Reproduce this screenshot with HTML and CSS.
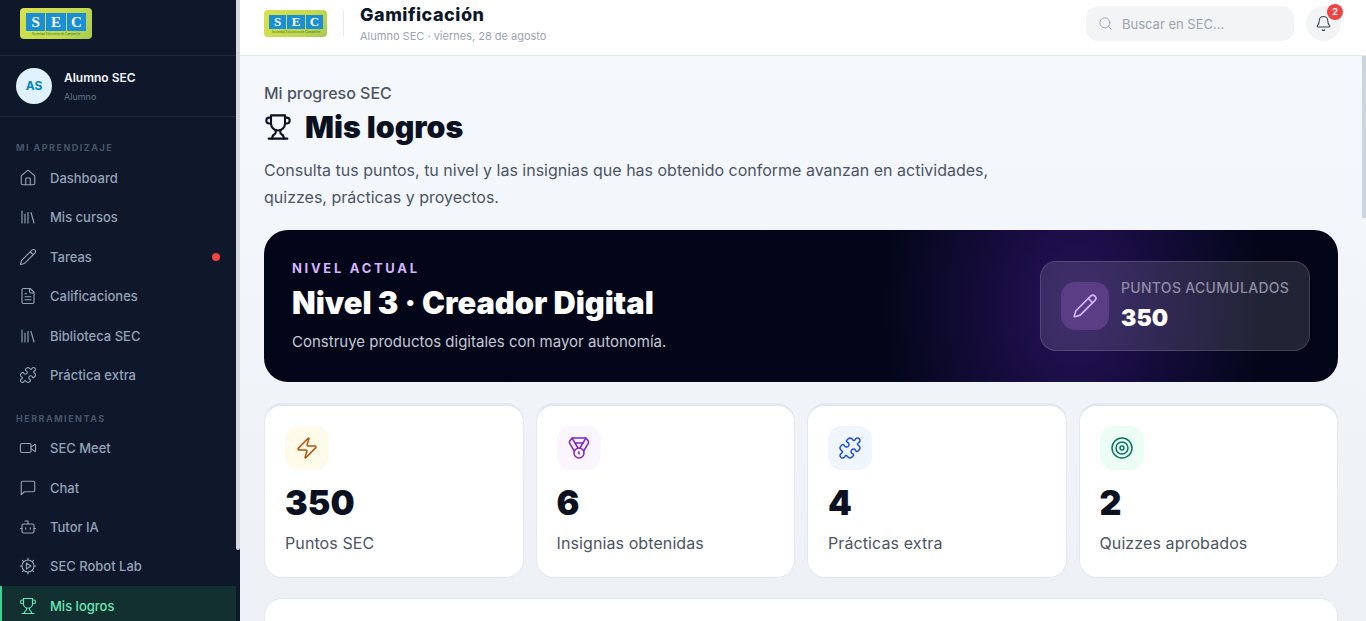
FILE: index.html
```html
<!DOCTYPE html>
<html lang="es">
<head>
    <meta charset="UTF-8">
    <title>Mis logros - SEC</title>
    <link rel="stylesheet" href="styles.css">
</head>
<body>
<svg class="sprite" xmlns="http://www.w3.org/2000/svg">
    <symbol id="i-house" viewBox="0 0 24 24"><path d="M15 21v-8a1 1 0 0 0-1-1h-4a1 1 0 0 0-1 1v8"/><path d="M3 10a2 2 0 0 1 .709-1.528l7-5.999a2 2 0 0 1 2.582 0l7 5.999A2 2 0 0 1 21 10v9a2 2 0 0 1-2 2H5a2 2 0 0 1-2-2z"/></symbol>
    <symbol id="i-library" viewBox="0 0 24 24"><path d="m16 6 4 14"/><path d="M12 6v14"/><path d="M8 8v12"/><path d="M4 4v16"/></symbol>
    <symbol id="i-pencil" viewBox="0 0 24 24"><path d="M21.174 6.812a1 1 0 0 0-3.986-3.987L3.842 16.174a2 2 0 0 0-.5.83l-1.321 4.352a.5.5 0 0 0 .623.622l4.353-1.32a2 2 0 0 0 .83-.497z"/><path d="m15 5 4 4"/></symbol>
    <symbol id="i-file" viewBox="0 0 24 24"><path d="M15 2H6a2 2 0 0 0-2 2v16a2 2 0 0 0 2 2h12a2 2 0 0 0 2-2V7Z"/><path d="M14 2v4a2 2 0 0 0 2 2h4"/><path d="M10 9H8"/><path d="M16 13H8"/><path d="M16 17H8"/></symbol>
    <symbol id="i-puzzle" viewBox="0 0 24 24"><path d="M19.439 7.85c-.049.322.059.648.289.878l1.568 1.568c.47.47.706 1.087.706 1.704s-.235 1.233-.706 1.704l-1.611 1.611a.98.98 0 0 1-.837.276c-.47-.07-.802-.48-.968-.925a2.501 2.501 0 1 0-3.214 3.214c.446.166.855.497.925.968a.979.979 0 0 1-.276.837l-1.61 1.61a2.404 2.404 0 0 1-1.705.707 2.402 2.402 0 0 1-1.704-.706l-1.568-1.568a1.026 1.026 0 0 0-.877-.29c-.493.074-.84.504-1.02.968a2.5 2.5 0 1 1-3.237-3.237c.464-.18.894-.527.967-1.02a1.026 1.026 0 0 0-.289-.877l-1.568-1.568A2.402 2.402 0 0 1 1.998 12c0-.617.236-1.234.706-1.704L4.23 8.77c.24-.24.581-.353.917-.303.515.077.877.528 1.073 1.01a2.5 2.5 0 1 0 3.259-3.259c-.482-.196-.933-.558-1.01-1.073-.05-.336.062-.676.303-.917l1.525-1.525A2.402 2.402 0 0 1 12 1.998c.617 0 1.234.236 1.704.706l1.568 1.568c.23.23.556.338.877.29.493-.074.84-.504 1.02-.968a2.5 2.5 0 1 1 3.237 3.237c-.464.18-.894.527-.967 1.02Z"/></symbol>
    <symbol id="i-video" viewBox="0 0 24 24"><path d="m16 13 5.223 3.482a.5.5 0 0 0 .777-.416V7.87a.5.5 0 0 0-.752-.432L16 10.5"/><rect x="2" y="6" width="14" height="12" rx="2"/></symbol>
    <symbol id="i-chat" viewBox="0 0 24 24"><path d="M21 15a2 2 0 0 1-2 2H7l-4 4V5a2 2 0 0 1 2-2h14a2 2 0 0 1 2 2z"/></symbol>
    <symbol id="i-bot" viewBox="0 0 24 24"><path d="M12 8V4H8"/><rect x="4" y="8" width="16" height="12" rx="2"/><path d="M2 14h2"/><path d="M20 14h2"/><path d="M15 13v2"/><path d="M9 13v2"/></symbol>
    <symbol id="i-gear" viewBox="0 0 24 24"><circle cx="12" cy="12" r="8"/><path d="M12 1.500V4M12 20v2.500M1.500 12H4M20 12h2.500M4.600 4.600l1.700 1.700M17.700 17.700l1.700 1.700M4.600 19.400l1.700-1.700M17.700 6.300l1.700-1.700"/><path d="M9.800 8v8l6.200-4z"/></symbol>
    <symbol id="i-trophy" viewBox="0 0 24 24"><path d="M6 9H4.500a2.500 2.500 0 0 1 0-5H6"/><path d="M18 9h1.500a2.500 2.500 0 0 0 0-5H18"/><path d="M4 22h16"/><path d="M10 14.660V17c0 .55-.47.98-.97 1.210C7.850 18.750 7 20.240 7 22"/><path d="M14 14.660V17c0 .55.47.98.97 1.210C16.150 18.750 17 20.240 17 22"/><path d="M18 2H6v7a6 6 0 0 0 12 0V2Z"/></symbol>
    <symbol id="i-bell" viewBox="0 0 24 24"><path d="M10.268 21a2 2 0 0 0 3.464 0"/><path d="M3.262 15.326A1 1 0 0 0 4 17h16a1 1 0 0 0 .74-1.673C19.410 13.956 18 12.499 18 8A6 6 0 0 0 6 8c0 4.499-1.411 5.956-2.738 7.326"/></symbol>
    <symbol id="i-search" viewBox="0 0 24 24"><circle cx="11" cy="11" r="8"/><path d="m21 21-4.300-4.300"/></symbol>
    <symbol id="i-zap" viewBox="0 0 24 24"><path d="M4 14a1 1 0 0 1-.78-1.630l9.900-10.200a.5.5 0 0 1 .86.46l-1.920 6.020A1 1 0 0 0 13 10h7a1 1 0 0 1 .78 1.630l-9.900 10.200a.5.5 0 0 1-.86-.46l1.920-6.020A1 1 0 0 0 11 14z"/></symbol>
    <symbol id="i-medal" viewBox="0 0 24 24"><path d="M7.210 15 2.660 7.140a2 2 0 0 1 .13-2.200L4.400 2.800A2 2 0 0 1 6 2h12a2 2 0 0 1 1.600.8l1.600 2.140a2 2 0 0 1 .14 2.200L16.790 15"/><path d="M11 12 5.120 2.200"/><path d="m13 12 5.880-9.800"/><path d="M8 7h8"/><circle cx="12" cy="17" r="5"/><path d="M12 18v-2h-.5"/></symbol>
    <symbol id="i-target" viewBox="0 0 24 24"><circle cx="12" cy="12" r="10"/><circle cx="12" cy="12" r="6"/><circle cx="12" cy="12" r="2"/></symbol>
</svg>

<div class="app">
    <aside class="sidebar">
        <div class="side-logo">
            <div class="logo">
                <div class="logo-tiles"><span>S</span><span>E</span><span>C</span></div>
                <div class="logo-sub">Sociedad Educativa de Campeche</div>
            </div>
        </div>
        <div class="side-user">
            <div class="avatar">AS</div>
            <div>
                <div class="user-name">Alumno SEC</div>
                <div class="user-role">Alumno</div>
            </div>
        </div>
        <nav class="side-nav">
            <div class="nav-label">MI APRENDIZAJE</div>
            <a class="nav-item"><svg class="icon"><use href="#i-house"/></svg>Dashboard</a>
            <a class="nav-item"><svg class="icon"><use href="#i-library"/></svg>Mis cursos</a>
            <a class="nav-item"><svg class="icon"><use href="#i-pencil"/></svg>Tareas<span class="nav-dot"></span></a>
            <a class="nav-item"><svg class="icon"><use href="#i-file"/></svg>Calificaciones</a>
            <a class="nav-item"><svg class="icon"><use href="#i-library"/></svg>Biblioteca SEC</a>
            <a class="nav-item"><svg class="icon"><use href="#i-puzzle"/></svg>Práctica extra</a>
            <div class="nav-label second">HERRAMIENTAS</div>
            <a class="nav-item"><svg class="icon"><use href="#i-video"/></svg>SEC Meet</a>
            <a class="nav-item"><svg class="icon"><use href="#i-chat"/></svg>Chat</a>
            <a class="nav-item"><svg class="icon"><use href="#i-bot"/></svg>Tutor IA</a>
            <a class="nav-item"><svg class="icon"><use href="#i-gear"/></svg>SEC Robot Lab</a>
            <a class="nav-item active"><svg class="icon"><use href="#i-trophy"/></svg>Mis logros</a>
        </nav>
        <div class="side-track"><div class="side-thumb"></div></div>
    </aside>

    <div class="main">
        <header class="topbar">
            <div class="logo small">
                <div class="logo-tiles"><span>S</span><span>E</span><span>C</span></div>
                <div class="logo-sub">Sociedad Educativa de Campeche</div>
            </div>
            <div class="top-sep"></div>
            <div class="top-title">
                <h2>Gamificación</h2>
                <p>Alumno SEC · viernes, 28 de agosto</p>
            </div>
            <div class="search"><svg class="icon"><use href="#i-search"/></svg>Buscar en SEC...</div>
            <div class="bell">
                <svg class="icon"><use href="#i-bell"/></svg>
                <span class="badge">2</span>
            </div>
        </header>

        <main class="content">
            <div class="eyebrow">Mi progreso SEC</div>
            <h1 class="page-title"><svg class="icon"><use href="#i-trophy"/></svg>Mis logros</h1>
            <p class="intro">Consulta tus puntos, tu nivel y las insignias que has obtenido conforme avanzan en actividades, quizzes, prácticas y proyectos.</p>

            <section class="hero">
                <div>
                    <div class="hero-kicker">NIVEL ACTUAL</div>
                    <div class="hero-title">Nivel 3 · Creador Digital</div>
                    <div class="hero-text">Construye productos digitales con mayor autonomía.</div>
                </div>
                <div class="points">
                    <div class="points-icon"><svg class="icon"><use href="#i-pencil"/></svg></div>
                    <div>
                        <div class="points-label">PUNTOS ACUMULADOS</div>
                        <div class="points-value">350</div>
                    </div>
                </div>
            </section>

            <section class="stats">
                <div class="stat">
                    <div class="stat-icon amber"><svg class="icon"><use href="#i-zap"/></svg></div>
                    <div class="stat-num">350</div>
                    <div class="stat-label">Puntos SEC</div>
                </div>
                <div class="stat">
                    <div class="stat-icon violet"><svg class="icon"><use href="#i-medal"/></svg></div>
                    <div class="stat-num">6</div>
                    <div class="stat-label">Insignias obtenidas</div>
                </div>
                <div class="stat">
                    <div class="stat-icon blue"><svg class="icon"><use href="#i-puzzle"/></svg></div>
                    <div class="stat-num">4</div>
                    <div class="stat-label">Prácticas extra</div>
                </div>
                <div class="stat">
                    <div class="stat-icon green"><svg class="icon"><use href="#i-target"/></svg></div>
                    <div class="stat-num">2</div>
                    <div class="stat-label">Quizzes aprobados</div>
                </div>
            </section>

            <section class="panel"></section>
            <div class="main-thumb"></div>
        </main>
    </div>
</div>
</body>
</html>
```

FILE: styles.css
```css
* {
    box-sizing: border-box;
}

body, h1, h2, p {
    margin: 0;
    padding: 0;
}

body {
    font-family: Inter, "Noto Sans", sans-serif;
    background: #f4f7fb;
    color: #0f172a;
    overflow: hidden;
}

.sprite {
    display: none;
}

.icon {
    width: 18px;
    height: 18px;
    flex: none;
    fill: none;
    stroke: currentColor;
    stroke-width: 1.5;
    stroke-linecap: round;
    stroke-linejoin: round;
}

.app {
    display: flex;
    height: 621px;
}

/* logo */
.logo {
    width: 72px;
    height: 31px;
    border-radius: 4px;
    padding: 5px 6px 0;
    background: linear-gradient(135deg, #d8e24c, #c4d94e 60%, #a9cb50);
    overflow: hidden;
}

.logo-tiles {
    display: flex;
    gap: 1px;
}

.logo-tiles span {
    flex: 1;
    height: 18px;
    background: #1a8fd6;
    color: #fff;
    font: bold 15px/18px "Liberation Serif", serif;
    text-align: center;
}

.logo-sub {
    font-size: 3px;
    line-height: 6px;
    color: #3b7a3a;
    text-align: center;
    white-space: nowrap;
}

.logo.small {
    width: 63px;
    height: 27px;
    padding: 5px 4px 0 5px;
    flex: none;
}

.logo.small .logo-tiles span {
    height: 14px;
    font-size: 13px;
    line-height: 14px;
}

/* sidebar */
.sidebar {
    position: relative;
    width: 240px;
    flex: none;
    height: 100%;
    padding-right: 4px;
    background: #0f172a;
    overflow: hidden;
}

.side-track {
    position: absolute;
    top: 0;
    right: 0;
    bottom: 0;
    width: 4px;
    background: #0f172a;
}

.side-thumb {
    height: 550px;
    border-radius: 0 0 2px 2px;
    background: #d6d9de;
}

.side-logo {
    height: 56px;
    padding: 8px 20px 0;
    border-bottom: 1px solid #1e293b;
}

.side-user {
    display: flex;
    align-items: center;
    gap: 12px;
    height: 61px;
    padding: 0 16px;
    border-bottom: 1px solid #1e293b;
}

.avatar {
    width: 36px;
    height: 36px;
    border-radius: 50%;
    background: #e0f2fe;
    color: #0284c7;
    font-size: 12px;
    font-weight: 700;
    line-height: 36px;
    text-align: center;
}

.user-name {
    font-size: 12px;
    font-weight: 600;
    line-height: 16px;
    color: #f1f5f9;
}

.user-role {
    margin-top: 5px;
    font-size: 9px;
    line-height: 12px;
    color: #64748b;
}

.side-nav {
    padding: 25px 0 45px;
}

.nav-label {
    padding: 0 16px;
    margin-bottom: 4.4px;
    font-size: 9px;
    font-weight: 700;
    line-height: 12px;
    letter-spacing: 1.5px;
    color: #475569;
}

.nav-label.second {
    margin-top: 18.2px;
    margin-bottom: 3.7px;
}

.nav-item {
    display: flex;
    align-items: center;
    gap: 13px;
    height: 39.4px;
    padding-left: 19px;
    padding-right: 16px;
    font-size: 13px;
    font-weight: 500;
    color: #94a3b8;
}

.nav-item.active {
    background: #12302f;
    border-left: 2px solid #34d399;
    padding-left: 17px;
    color: #6ee7b7;
}

.nav-dot {
    width: 8px;
    height: 8px;
    margin-left: auto;
    border-radius: 50%;
    background: #ef4444;
}

/* top bar */
.main {
    flex: 1;
    min-width: 0;
    display: flex;
    flex-direction: column;
    height: 100%;
}

.topbar {
    height: 56px;
    flex: none;
    display: flex;
    align-items: center;
    padding: 0 25px 8px 24px;
    background: #fff;
    border-bottom: 1px solid #e5e7eb;
}

.top-sep {
    width: 1px;
    height: 25px;
    margin: 0 16px;
    background: #e5e7eb;
}

.top-title {
    flex: 1;
    padding-bottom: 2px;
}

.top-title h2 {
    font-size: 18px;
    font-weight: 800;
    line-height: 24px;
    letter-spacing: 0.5px;
    color: #0f172a;
}

.top-title p {
    margin-top: 2px;
    font-size: 11px;
    line-height: 14px;
    color: #9ca3af;
}

.search {
    display: flex;
    align-items: center;
    gap: 9px;
    width: 208px;
    height: 35px;
    padding: 0 12px;
    border-radius: 12px;
    background: #f3f4f6;
    font-size: 13px;
    color: #9ca3af;
}

.search .icon {
    width: 15px;
    height: 15px;
}

.bell {
    position: relative;
    width: 35px;
    height: 35px;
    margin-left: 12px;
    display: flex;
    align-items: center;
    justify-content: center;
    border-radius: 50%;
    background: #f3f4f6;
    color: #374151;
}

.bell .icon {
    width: 17px;
    height: 17px;
}

.badge {
    position: absolute;
    top: -2px;
    right: -2px;
    width: 16px;
    height: 16px;
    border-radius: 50%;
    background: #ef4444;
    color: #fff;
    font-size: 9px;
    font-weight: 700;
    line-height: 16px;
    text-align: center;
}

/* page */
.content {
    position: relative;
    flex: 1;
    overflow: hidden;
    padding: 27px 28px 24px 24px;
    background: linear-gradient(180deg, #f5f8fc 0, #edf1f5 565px);
}

.main-thumb {
    position: absolute;
    top: 0;
    right: 0;
    width: 4px;
    height: 162px;
    background: #cbd5e1;
}

.eyebrow {
    font-size: 16px;
    font-weight: 500;
    line-height: 20px;
    color: #4b5563;
}

.page-title {
    display: flex;
    align-items: center;
    gap: 13px;
    margin-top: 4px;
    font-size: 30.3px;
    font-weight: 900;
    line-height: 40px;
    color: #0b1120;
}

.page-title .icon {
    width: 28px;
    height: 28px;
    stroke-width: 1.8;
}

.intro {
    max-width: 760px;
    margin-top: 10px;
    font-size: 16px;
    line-height: 27px;
    color: #4b5563;
}

.hero {
    display: flex;
    align-items: center;
    justify-content: space-between;
    height: 152px;
    margin-top: 19px;
    padding: 0 28px;
    border-radius: 24px;
    background: radial-gradient(ellipse 190px 260px at 810px 50%, #26115a 0, rgba(38, 17, 90, 0) 100%), #030619;
    color: #fff;
}

.hero-kicker {
    font-size: 13px;
    font-weight: 700;
    letter-spacing: 2.7px;
    line-height: 16px;
    color: #d8b4fe;
}

.hero-title {
    margin-top: 7px;
    font-size: 30.8px;
    font-weight: 900;
    line-height: 40px;
}

.hero-text {
    margin-top: 9px;
    font-size: 15px;
    line-height: 20px;
    color: #c4c9d6;
}

.points {
    display: flex;
    align-items: center;
    gap: 12px;
    width: 270px;
    height: 90px;
    padding: 0 20px;
    border: 1px solid rgba(255, 255, 255, 0.14);
    border-radius: 16px;
    background: rgba(255, 255, 255, 0.12);
}

.points-icon {
    width: 48px;
    height: 48px;
    flex: none;
    display: flex;
    align-items: center;
    justify-content: center;
    border-radius: 14px;
    background: #5a3d85;
    color: #d8b4fe;
}

.points-icon .icon {
    width: 26px;
    height: 26px;
}

.points-label {
    font-size: 14px;
    font-weight: 500;
    line-height: 18px;
    letter-spacing: 0.3px;
    white-space: nowrap;
    color: #8f8ca6;
}

.points-value {
    margin-top: 6px;
    font-size: 23px;
    font-weight: 900;
    line-height: 30px;
}

.stats {
    display: grid;
    grid-template-columns: repeat(4, 1fr);
    gap: 12px;
    margin-top: 21px;
}

.stat {
    height: 175px;
    padding: 20px;
    background: #fff;
    border: 1px solid #e2e8f0;
    border-top: 3px solid #e2e8f0;
    border-radius: 18px;
}

.stat-icon {
    width: 44px;
    height: 44px;
    display: flex;
    align-items: center;
    justify-content: center;
    border-radius: 14px;
}

.stat-icon .icon {
    width: 24px;
    height: 24px;
}

.amber {
    background: #fffbeb;
    color: #b45309;
}

.violet {
    background: #faf5ff;
    color: #7e22ce;
}

.blue {
    background: #eff6ff;
    color: #1d4ed8;
}

.green {
    background: #ecfdf5;
    color: #047857;
}

.stat-num {
    margin-top: 9px;
    font-size: 34px;
    font-weight: 900;
    line-height: 48px;
    color: #0b1120;
}

.stat-label {
    margin-top: 5px;
    font-size: 16px;
    line-height: 22px;
    letter-spacing: 0.1px;
    color: #4b5563;
}

.panel {
    height: 300px;
    margin-top: 20px;
    background: #fff;
    border: 1px solid #e2e8f0;
    border-radius: 18px;
}
```
